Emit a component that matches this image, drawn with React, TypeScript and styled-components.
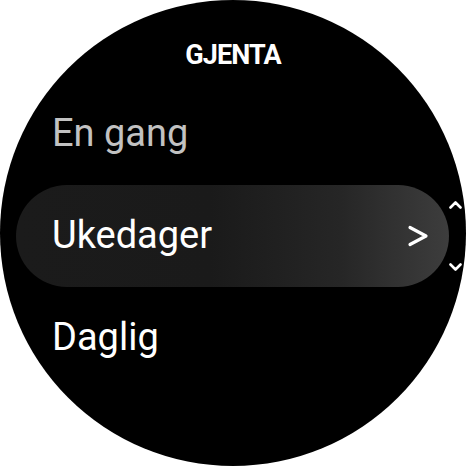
import styled, { createGlobalStyle } from "styled-components";

const GlobalStyle = createGlobalStyle`
  html, body {
    margin: 0;
    padding: 0;
    background: #ffffff;
  }
  body {
    font-family: Roboto, "Noto Sans", sans-serif;
  }
`;

const Watch = styled.div`
  width: 466px;
  height: 466px;
  border-radius: 50%;
  background: #000000;
  overflow: hidden;
  display: flex;
  flex-direction: column;
`;

const Title = styled.h1`
  margin: 0;
  height: 83px;
  padding-top: 36px;
  box-sizing: border-box;
  text-align: center;
  color: #ffffff;
  font-size: 27px;
  font-weight: 700;
  line-height: 38px;
  letter-spacing: -0.9px;
`;

const ListArea = styled.div`
  display: flex;
  align-items: center;
`;

const List = styled.div`
  display: flex;
  flex-direction: column;
  margin-left: 16px;
  width: 433px;
`;

const Row = styled.div<{ $selected?: boolean; $dim?: boolean }>`
  height: 102px;
  border-radius: 51px;
  display: flex;
  align-items: center;
  justify-content: space-between;
  padding: 0 20px 0 36px;
  box-sizing: border-box;
  background: ${(p) =>
    p.$selected
      ? "linear-gradient(90deg, #1b1b1b 0%, #1a1a1a 45%, #262626 75%, #3d3d3d 100%)"
      : "transparent"};
  color: ${(p) => (p.$dim ? "#c2c2c2" : "#ffffff")};
  font-size: 38px;
  line-height: 1;
`;

const Label = styled.span`
  padding-bottom: 2px;
`;

const Scroll = styled.div`
  display: flex;
  flex-direction: column;
  justify-content: space-between;
  width: 13px;
  height: 70px;
`;

const Chevron = ({ d, w, h, sw }: { d: string; w: number; h: number; sw: number }) => (
  <svg width={w} height={h} viewBox={`0 0 ${w} ${h}`} fill="none">
    <path d={d} stroke="#ffffff" strokeWidth={sw} strokeLinecap="round" strokeLinejoin="round" />
  </svg>
);

export default function App() {
  return (
    <>
      <GlobalStyle />
      <Watch>
        <Title>GJENTA</Title>
        <ListArea>
          <List>
            <Row $dim>
              <Label>En gang</Label>
            </Row>
            <Row $selected>
              <Label>Ukedager</Label>
              <Chevron w={22} h={22} sw={3.2} d="M3 2.5 L19 11 L3 19.5" />
            </Row>
            <Row>
              <Label>Daglig</Label>
            </Row>
          </List>
          <Scroll>
            <Chevron w={13} h={8} sw={2.6} d="M1.5 6.5 L6.5 1.5 L11.5 6.5" />
            <Chevron w={13} h={8} sw={2.6} d="M1.5 1.5 L6.5 6.5 L11.5 1.5" />
          </Scroll>
        </ListArea>
      </Watch>
    </>
  );
}
